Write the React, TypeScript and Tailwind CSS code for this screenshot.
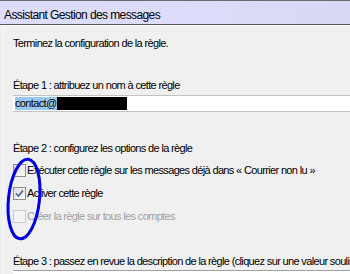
const FONT = { fontFamily: '"Liberation Sans", Arial, sans-serif' };

function Checkbox({ checked, disabled }: { checked?: boolean; disabled?: boolean }) {
  return (
    <span
      className={`flex h-[13px] w-[13px] shrink-0 items-center justify-center border ${
        disabled ? 'border-[#c8c8c8] bg-[#f4f4f4]' : 'border-[#8e8f8f] bg-gradient-to-br from-[#dcdcdc] to-[#fbfbfb]'
      }`}
    >
      {checked && (
        <svg viewBox="0 0 9 9" className="h-[9px] w-[9px]">
          <path d="M1 4.5 L3.5 7 L8 1.5" fill="none" stroke="#4a5f97" strokeWidth="1.6" />
        </svg>
      )}
    </span>
  );
}

export default function App() {
  return (
    <div
      className="relative h-[274px] w-[350px] overflow-hidden bg-[#f0f0f0] text-[11px] tracking-[-0.65px] text-black"
      style={FONT}
    >
      <div className="h-[25px] border-b border-t border-b-[#5a5a5a] border-t-[#6b6b6b] bg-gradient-to-r from-[#dcdcfc] via-[#dddcfa] to-[#d8d8f4] pl-[4px] pt-[5px] text-[12px] tracking-[-0.6px]">
        Assistant Gestion des messages
      </div>

      <div className="ml-[3px] h-full border-l border-t border-[#fbfbfb] pl-[9px] pt-[10px]">
        <div className="leading-[14px]">Terminez la configuration de la règle.</div>

        <div className="mt-[28px] leading-[14px]">Étape 1 : attribuez un nom à cette règle</div>
        <div className="mt-[3px] flex h-[17px] items-center border-b border-t border-[#c2c2c2] bg-white pl-[2px]">
          <span className="bg-[#99c9ef] pr-[1px] leading-[13px]">contact@</span>
          <span className="h-[13px] w-[70px] bg-black" />
        </div>

        <div className="mt-[29px] leading-[14px]">Étape 2 : configurez les options de la règle</div>
        <div className="mt-[9px] flex flex-col gap-[10px]">
          <div className="flex items-center gap-[1px] whitespace-nowrap leading-[13px]">
            <Checkbox />
            <span>Exécuter cette règle sur les messages déjà dans « Courrier non lu »</span>
          </div>
          <div className="flex items-center gap-[1px] leading-[13px]">
            <Checkbox checked />
            <span>Activer cette règle</span>
          </div>
          <div className="flex items-center gap-[1px] leading-[13px] text-[#a0a0a0]">
            <Checkbox disabled />
            <span>Créer la règle sur tous les comptes</span>
          </div>
        </div>

        <div className="mt-[31px] whitespace-nowrap leading-[14px]">
          Étape 3 : passez en revue la description de la règle (cliquez sur une valeur soulignée)
        </div>
        <div className="mt-[2px] h-[10px] border-t border-[#a0a0a0] bg-white" />
      </div>

      <svg className="pointer-events-none absolute left-0 top-0" width="350" height="274">
        <ellipse
          cx="24"
          cy="199"
          rx="15.5"
          ry="40"
          transform="rotate(6 24 199)"
          fill="none"
          stroke="#0000e0"
          strokeWidth="3"
        />
      </svg>
    </div>
  );
}
